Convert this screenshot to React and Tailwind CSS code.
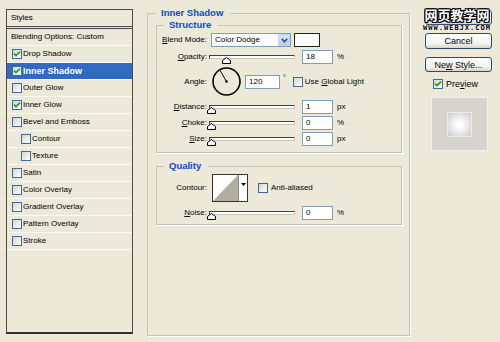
import React from "react";

const Check = ({ checked }) => (
  <span className="w-[10px] h-[10px] border border-[#3d6a9a] bg-[linear-gradient(135deg,#d6d4ca,#ffffff)] flex items-center justify-center shrink-0">
    {checked && (
      <svg width="8" height="8" viewBox="0 0 8 8">
        <path d="M1 3.6 L3 5.6 L7 1.6" stroke="#21a121" strokeWidth="1.8" fill="none" />
      </svg>
    )}
  </span>
);

const Slider = ({ pct }) => (
  <div className="relative w-[86px] h-[14px] ml-[2px] shrink-0">
    <div className="absolute left-0 right-0 top-[5px] h-[4px] bg-white border border-[#404040] border-b-[#c8c4b8] border-r-[#c8c4b8]" />
    <svg
      className="absolute top-[7px]"
      style={{ left: -2 + (pct / 100) * 85 }}
      width="9"
      height="7"
      viewBox="0 0 9 7"
    >
      <path d="M4.5 0.5 L8.5 3.5 L8.5 6.5 L0.5 6.5 L0.5 3.5 Z" fill="#fff" stroke="#000" />
    </svg>
  </div>
);

const Input = ({ v, w = "w-[31px]" }) => (
  <div className={`${w} h-[14px] bg-white border border-[#7f9db9] flex items-center pl-[3px] shrink-0`}>{v}</div>
);

const Label = ({ children }) => <div className="w-[50px] text-right shrink-0 whitespace-nowrap">{children}</div>;

const U = ({ children }) => <span className="underline underline-offset-1">{children}</span>;

const rows = [
  { t: "Drop Shadow", c: true },
  { t: "Inner Shadow", c: true, sel: true },
  { t: "Outer Glow" },
  { t: "Inner Glow", c: true },
  { t: "Bevel and Emboss" },
  { t: "Contour", indent: true },
  { t: "Texture", indent: true },
  { t: "Satin" },
  { t: "Color Overlay" },
  { t: "Gradient Overlay" },
  { t: "Pattern Overlay" },
  { t: "Stroke" },
];

const Button = ({ children, className = "" }) => (
  <div
    className={`h-[15px] w-[67px] border border-[#2b4a6e] rounded-[3px] bg-[linear-gradient(#ffffff,#f3f2ec_70%,#d8d4c6)] flex items-center justify-center text-[9px] ${className}`}
  >
    {children}
  </div>
);

export default function App() {
  return (
    <div className="w-[500px] h-[342px] bg-[#ECE9D8] flex items-start font-['Liberation_Sans',Arial,sans-serif] text-[8px] leading-[10px] text-black overflow-hidden">
      {/* Left styles list */}
      <div className="ml-[6px] mt-[9px] w-[127px] h-[325px] border border-[#4a4a4a] border-b-2 border-b-[#333] flex flex-col">
        <div className="h-[19px] pl-[4px] flex items-center border-b-[3px] border-double border-[#4a4a4a] shrink-0">Styles</div>
        <div className="h-[17px] pl-[4px] flex items-center border-b border-[#fbfaf4] shrink-0">Blending Options: Custom</div>
        {rows.map((r) => (
          <div
            key={r.t}
            className={`h-[17px] flex items-center border-b border-[#fbfaf4] shrink-0 ${r.indent ? "pl-[14px]" : "pl-[5px]"} ${
              r.sel ? "bg-[#316ac5] text-white font-bold text-[9px]" : ""
            }`}
          >
            <Check checked={r.c} />
            <span className="ml-[1px]">{r.t}</span>
          </div>
        ))}
      </div>

      {/* Main group */}
      <fieldset className="ml-[14px] mt-[7px] w-[263px] h-[329px] border border-[#c6c3b3] shadow-[1px_1px_0_#fff] pl-[8px] pr-0 pb-0 m-0">
        <legend className="pl-[5px] pr-[7px] h-[12px] leading-[12px] text-[9.5px] font-bold text-[#0b46d8]">Inner Shadow</legend>

        <fieldset className="w-[246px] border border-[#c6c3b3] shadow-[1px_1px_0_#fff] p-0 pb-[6px] m-0">
          <legend className="ml-[7px] pl-[5px] pr-[7px] h-[12px] leading-[12px] text-[9.5px] font-bold text-[#0b46d8]">Structure</legend>

          <div className="mt-[2px] h-[14px] flex items-center">
            <Label>
              <U>B</U>lend Mode:
            </Label>
            <div className="ml-[4px] w-[80px] h-[14px] bg-white border border-[#7f9db9] flex items-center pl-[3px] relative">
              Color Dodge
              <div className="absolute right-0 top-0 w-[12px] h-[12px] bg-[linear-gradient(#dbe6fb,#b4cbf3)] border border-[#c3d3fd] flex items-center justify-center">
                <svg width="7" height="5" viewBox="0 0 7 5">
                  <path d="M0.8 0.8 L3.5 3.8 L6.2 0.8" stroke="#2c4584" strokeWidth="1.5" fill="none" />
                </svg>
              </div>
            </div>
            <div className="ml-[3px] w-[26px] h-[14px] bg-white border border-[#222]" />
          </div>

          <div className="mt-[3px] h-[14px] flex items-center">
            <Label>
              <U>O</U>pacity:
            </Label>
            <Slider pct={18} />
            <div className="ml-[7px]">
              <Input v="18" />
            </div>
            <span className="ml-[4px]">%</span>
          </div>

          <div className="mt-[3px] h-[29px] flex items-center">
            <Label>Angle:</Label>
            <svg className="ml-[5px] shrink-0" width="29" height="29" viewBox="0 0 29 29">
              <circle cx="14.5" cy="14.5" r="13.5" stroke="#000" strokeWidth="1.6" fill="none" />
              <line x1="14.5" y1="14.5" x2="8" y2="3.3" stroke="#000" strokeWidth="1" />
              <circle cx="14.5" cy="14.5" r="1.3" fill="#000" />
            </svg>
            <div className="ml-[4px]">
              <Input v="120" w="w-[35px]" />
            </div>
            <span className="ml-[3px] self-start mt-[6px] text-[7px]">°</span>
            <div className="ml-[7px] flex items-center">
              <Check />
              <span className="ml-[2px]">
                Use <U>G</U>lobal Light
              </span>
            </div>
          </div>

          <div className="mt-[4px] h-[14px] flex items-center">
            <Label>
              <U>D</U>istance:
            </Label>
            <Slider pct={0} />
            <div className="ml-[7px]">
              <Input v="1" />
            </div>
            <span className="ml-[4px]">px</span>
          </div>

          <div className="mt-[2px] h-[14px] flex items-center">
            <Label>
              <U>C</U>hoke:
            </Label>
            <Slider pct={0} />
            <div className="ml-[7px]">
              <Input v="0" />
            </div>
            <span className="ml-[4px]">%</span>
          </div>

          <div className="mt-[2px] h-[14px] flex items-center">
            <Label>
              <U>S</U>ize:
            </Label>
            <Slider pct={0} />
            <div className="ml-[7px]">
              <Input v="0" />
            </div>
            <span className="ml-[4px]">px</span>
          </div>
        </fieldset>

        <fieldset className="mt-[7px] w-[246px] border border-[#c6c3b3] shadow-[1px_1px_0_#fff] p-0 pb-[4px] m-0">
          <legend className="ml-[7px] pl-[5px] pr-[7px] h-[12px] leading-[12px] text-[9.5px] font-bold text-[#0b46d8]">Quality</legend>

          <div className="mt-[2px] h-[28px] flex items-center">
            <Label>Contour:</Label>
            <div className="ml-[5px] w-[36px] h-[28px] border border-[#333] bg-white flex shrink-0">
              <svg width="25" height="26" viewBox="0 0 25 26">
                <polygon points="0,26 25,0 25,26" fill="#b3ad9f" />
              </svg>
              <div className="w-[9px] border-l border-[#888] flex justify-center pt-[8px]">
                <svg width="5" height="3" viewBox="0 0 5 3">
                  <polygon points="0,0 5,0 2.5,3" fill="#000" />
                </svg>
              </div>
            </div>
            <div className="ml-[10px] flex items-center">
              <Check />
              <span className="ml-[3px]">Anti-aliased</span>
            </div>
          </div>

          <div className="mt-[4px] h-[14px] flex items-center">
            <Label>
              <U>N</U>oise:
            </Label>
            <Slider pct={0} />
            <div className="ml-[7px]">
              <Input v="0" />
            </div>
            <span className="ml-[4px]">%</span>
          </div>
        </fieldset>
      </fieldset>

      {/* Right column */}
      <div className="ml-[15px] mt-[10px] w-[67px] flex flex-col relative">
        <Button />
        <Button className="mt-[8px] h-[16px]">Cancel</Button>
        <Button className="mt-[8px]">
          Ne<U>w</U>&nbsp;Style...
        </Button>
        <div className="mt-[6px] ml-[8px] h-[11px] flex items-center text-[9px]">
          <Check checked />
          <span className="ml-[3px]">
            Pre<U>v</U>iew
          </span>
        </div>
        <div className="mt-[8px] ml-[6px] w-[57px] h-[54px] bg-[#d6d4cf] border border-[#f2f1ec] flex items-start">
          <div className="ml-[15px] mt-[14px] w-[25px] h-[25px] border border-[#ececec] bg-[radial-gradient(circle,#ffffff_15%,#e4e4e4_60%,#c9c9c9)]" />
        </div>

        {/* watermark overlay */}
        <div className="absolute left-[-2px] top-[-2px] w-[68px] flex flex-col items-center pointer-events-none">
          <div className="text-[13px] leading-[14px] font-bold text-white font-['Noto_Sans_CJK_SC',sans-serif] [text-shadow:1px_0_0_#000,-1px_0_0_#000,0_1px_0_#000,0_-1px_0_#000,1px_1px_0_#000,-1px_-1px_0_#000,1px_-1px_0_#000,-1px_1px_0_#000]">
            网页教学网
          </div>
          <div className="mt-[3px] text-[7px] leading-[7px] font-bold tracking-[1px] font-['DejaVu_Sans_Mono',monospace] text-black [text-shadow:0_0_1px_#fff]">
            WWW.WEBJX.COM
          </div>
        </div>
      </div>
    </div>
  );
}
